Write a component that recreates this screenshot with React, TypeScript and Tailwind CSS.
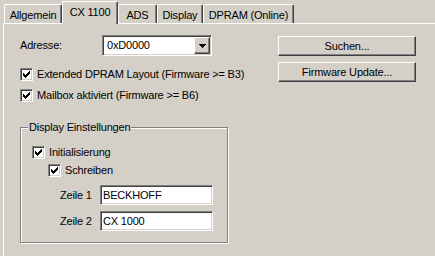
import React from 'react';

const CHECK_PIXELS = [
    [6, 0], [5, 1], [6, 1], [0, 2], [4, 2], [5, 2], [6, 2],
    [0, 3], [1, 3], [3, 3], [4, 3], [5, 3], [0, 4], [1, 4], [2, 4], [3, 4], [4, 4],
    [1, 5], [2, 5], [3, 5], [2, 6],
];

function CheckBox({ label }: { label: string }) {
    return (
        <div className="flex items-center h-[13px]">
            <div className="w-[13px] h-[13px] flex items-center justify-center bg-white border border-t-[#808080] border-l-[#808080] border-r-white border-b-white shadow-[inset_1px_1px_0_#404040,inset_-1px_-1px_0_#d4d0c8]">
                <svg width="7" height="7" viewBox="0 0 7 7" shapeRendering="crispEdges">
                    {CHECK_PIXELS.map(([x, y]) => (
                        <rect key={`${x}-${y}`} x={x} y={y} width="1" height="1" fill="#000" />
                    ))}
                </svg>
            </div>
            <span className="ml-[4px] leading-[13px]">{label}</span>
        </div>
    );
}

function Button({ label, className }: { label: string; className?: string }) {
    return (
        <div className={`w-[138px] h-[20px] flex items-center justify-center border border-t-white border-l-white border-r-[#404040] border-b-[#404040] shadow-[inset_-1px_-1px_0_#808080] ${className ?? ''}`}>
            {label}
        </div>
    );
}

function TextField({ value, className }: { value: string; className?: string }) {
    return (
        <div className={`h-[20px] flex items-center pl-[2px] bg-white border border-t-[#808080] border-l-[#808080] border-r-white border-b-white shadow-[inset_1px_1px_0_#404040,inset_-1px_-1px_0_#d4d0c8] ${className ?? ''}`}>
            {value}
        </div>
    );
}

function Tab({ label, width, selected }: { label: string; width: string; selected?: boolean }) {
    if (selected) {
        return (
            <div className={`${width} h-[23px] -mb-px z-10 bg-[#d4d0c8] flex justify-center pt-[4px] rounded-t-[2px] border-t border-l border-r border-t-white border-l-white border-r-[#404040] shadow-[inset_-1px_0_0_#808080]`}>
                {label}
            </div>
        );
    }
    return (
        <div className={`${width} h-[19px] flex justify-center pt-[4px] rounded-t-[2px] border-t border-l border-r border-t-white border-l-white border-r-[#404040] shadow-[inset_-1px_0_0_#808080]`}>
            {label}
        </div>
    );
}

export default function App() {
    return (
        <div className="w-[435px] h-[256px] overflow-hidden bg-[#d4d0c8] text-black text-[11px] leading-[13px] tracking-[-0.18px] font-['Liberation_Sans',Arial,sans-serif] flex flex-col">
            <div className="flex items-end h-[23px] pl-[4px]">
                <Tab label="Allgemein" width="w-[58px]" />
                <Tab label="CX 1100" width="w-[56px]" selected />
                <Tab label="ADS" width="w-[39px]" />
                <Tab label="Display" width="w-[46px]" />
                <Tab label="DPRAM (Online)" width="w-[91px]" />
            </div>
            <div className="flex-1 ml-[3px] border-t border-l border-white pl-[16px] pt-[11px]">
                <div className="flex">
                    <div className="w-[258px]">
                        <div className="flex items-center h-[21px]">
                            <span className="w-[82px]">Adresse:</span>
                            <div className="w-[110px] h-[21px] flex items-center bg-white border border-t-[#808080] border-l-[#808080] border-r-white border-b-white shadow-[inset_1px_1px_0_#404040,inset_-1px_-1px_0_#d4d0c8] p-[1px]">
                                <span className="flex-1 pl-[3px]">0xD0000</span>
                                <div className="w-[16px] h-[17px] bg-[#d4d0c8] flex items-center justify-center border border-t-white border-l-white border-r-[#404040] border-b-[#404040] shadow-[inset_-1px_-1px_0_#808080]">
                                    <svg width="7" height="4" viewBox="0 0 7 4" shapeRendering="crispEdges">
                                        <path d="M0 0h7v1h-1v1h-1v1h-1v1h-1v-1h-1v-1h-1v-1h-1z" fill="#000" />
                                    </svg>
                                </div>
                            </div>
                        </div>
                        <div className="mt-[12px]">
                            <CheckBox label="Extended DPRAM Layout (Firmware >= B3)" />
                        </div>
                        <div className="mt-[8px]">
                            <CheckBox label="Mailbox aktiviert (Firmware >= B6)" />
                        </div>
                    </div>
                    <div className="flex flex-col pt-[1px]">
                        <Button label="Suchen..." />
                        <Button label="Firmware Update..." className="mt-[6px]" />
                    </div>
                </div>

                <div className="relative mt-[25px] w-[208px] h-[116px] border border-[#808080] shadow-[inset_1px_1px_0_#fff,1px_1px_0_#fff] pl-[11px] pt-[18px]">
                    <span className="absolute left-[7px] -top-[7px] px-[1px] bg-[#d4d0c8]">Display Einstellungen</span>
                    <CheckBox label="Initialisierung" />
                    <div className="mt-[5px] pl-[16px]">
                        <CheckBox label="Schreiben" />
                    </div>
                    <div className="mt-[8px] pl-[28px] flex items-center">
                        <span className="w-[40px]">Zeile 1</span>
                        <TextField value="BECKHOFF" className="w-[113px]" />
                    </div>
                    <div className="mt-[6px] pl-[28px] flex items-center">
                        <span className="w-[40px]">Zeile 2</span>
                        <TextField value="CX 1000" className="w-[113px]" />
                    </div>
                </div>
            </div>
        </div>
    );
}
